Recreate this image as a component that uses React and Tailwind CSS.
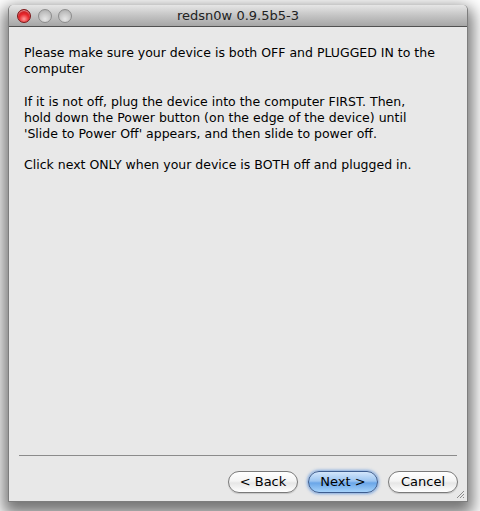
import React from "react";

function Light({ red }) {
  return red ? (
    <div className="w-[14px] h-[14px] rounded-full border border-[#7d1416] bg-[radial-gradient(circle_at_50%_75%,#ff9a9a_0%,#e8282c_45%,#a80d12_100%)] shadow-[inset_0_1px_1px_rgba(255,255,255,0.6)]" />
  ) : (
    <div className="w-[14px] h-[14px] rounded-full border border-[#8c8c8c] bg-[radial-gradient(circle_at_50%_75%,#e6e6e6_0%,#c8c8c8_50%,#a8a8a8_100%)]" />
  );
}

function Btn({ children, primary }) {
  return primary ? (
    <div className="w-[70px] h-[22px] rounded-full border border-[#3d5d8f] bg-[linear-gradient(to_bottom,#d3e6fb_0%,#9cc5f1_45%,#6aa6e8_55%,#a6d3fb_100%)] shadow-[0_0_3px_1px_rgba(80,140,220,0.7)] flex items-center justify-center text-[13px] text-black">
      {children}
    </div>
  ) : (
    <div className="w-[70px] h-[22px] rounded-full border border-[#7a7a7a] bg-[linear-gradient(to_bottom,#ffffff_0%,#f4f4f4_45%,#e6e6e6_55%,#ffffff_100%)] shadow-[0_1px_1px_rgba(0,0,0,0.15)] flex items-center justify-center text-[13px] text-black">
      {children}
    </div>
  );
}

export default function App() {
  return (
    <div
      className="w-[480px] h-[511px] bg-white pt-[5px] pl-[8px] overflow-hidden"
      style={{ fontFamily: '"DejaVu Sans", sans-serif' }}
    >
      <div className="w-[460px] h-[497px] flex flex-col rounded-t-[5px] border border-[#7d7d7d] border-t-0 shadow-[0_7px_16px_5px_rgba(0,0,0,0.55)] bg-[#e8e8e8] relative">
        <div className="h-[22px] rounded-t-[5px] bg-[linear-gradient(to_bottom,#e6e6e6_0%,#c4c4c4_50%,#a6a6a6_100%)] border-b border-[#515151] flex items-center relative shrink-0">
          <div className="flex gap-[6.5px] pl-[8px]">
            <Light red />
            <Light />
            <Light />
          </div>
          <div className="absolute inset-0 flex items-center justify-center text-[13px] text-[#222]">
            redsn0w 0.9.5b5-3
          </div>
        </div>
        <div className="flex-1 pl-[15px] pt-[18px] text-[12.5px] leading-[16px] text-black whitespace-nowrap">
          <p>
            Please make sure your device is both OFF and PLUGGED IN to the
            <br />
            computer
          </p>
          <p className="mt-[17px]">
            If it is not off, plug the device into the computer FIRST. Then,
            <br />
            hold down the Power button (on the edge of the device) until
            <br />
            'Slide to Power Off' appears, and then slide to power off.
          </p>
          <p className="mt-[15px]">Click next ONLY when your device is BOTH off and plugged in.</p>
        </div>
        <div className="mx-[10px] border-t border-[#8b8b8b]" />
        <div className="h-[45px] flex items-start justify-end gap-[10px] pr-[9px] pt-[15px]">
          <Btn>&lt; Back</Btn>
          <Btn primary>Next &gt;</Btn>
          <Btn>Cancel</Btn>
        </div>
        <svg className="absolute right-[2px] bottom-[2px]" width="10" height="10" viewBox="0 0 10 10">
          <path d="M9 2 L2 9 M9 5 L5 9 M9 8 L8 9" stroke="#8a8a8a" strokeWidth="1" />
        </svg>
      </div>
    </div>
  );
}
